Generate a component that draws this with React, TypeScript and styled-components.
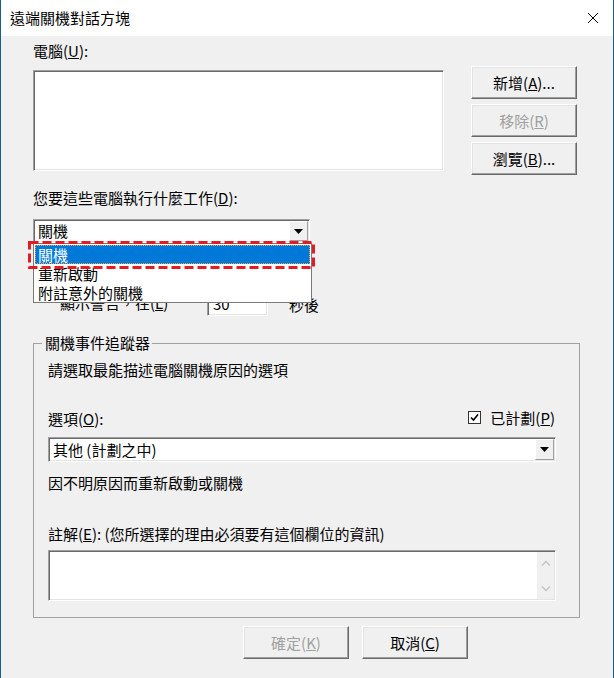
import React from "react";
import styled, { createGlobalStyle, css } from "styled-components";

const Global = createGlobalStyle`
  html, body { margin: 0; padding: 0; background: #ffffff; }
  body {
    font-family: "Noto Sans CJK TC", "Noto Sans", sans-serif;
    font-size: 15px;
    color: #000;
  }
  * { box-sizing: border-box; }
`;

const sunken = css`
  background: #ffffff;
  border: 1px solid;
  border-color: #a0a0a0 #ffffff #ffffff #a0a0a0;
  box-shadow: inset 1px 1px 0 #696969, inset -1px -1px 0 #e3e3e3;
`;

const Window = styled.div`
  width: 614px;
  height: 678px;
  border-left: 1px solid #1b5c8b;
  border-right: 1px solid #1b5c8b;
  background: #f0f0f0;
  display: flex;
  flex-direction: column;
  overflow: hidden;
`;

const TitleBar = styled.div`
  height: 36px;
  flex-shrink: 0;
  background: #ffffff;
  display: flex;
  align-items: center;
  justify-content: space-between;
  padding: 0 14px 0 9px;
`;

const Title = styled.span`
  line-height: 20px;
  white-space: nowrap;
`;

const CloseBtn = styled.div`
  width: 12px;
  height: 12px;
  display: flex;
`;

const Body = styled.div`
  padding-left: 32px;
  display: flex;
  flex-direction: column;
  align-items: flex-start;
`;

const Label = styled.div<{ $mt: number }>`
  margin-top: ${(p) => p.$mt}px;
  height: 20px;
  line-height: 20px;
  white-space: nowrap;
`;

const TopRow = styled.div`
  margin-top: 5px;
  display: flex;
  align-items: flex-start;
`;

const ListBox = styled.div`
  ${sunken};
  margin-top: 4px;
  width: 411px;
  height: 101px;
`;

const ButtonColumn = styled.div`
  margin-left: 27px;
  display: flex;
  flex-direction: column;
  gap: 5px;
`;

const PushButton = styled.div<{ $disabled?: boolean }>`
  width: 106px;
  height: 33px;
  display: flex;
  align-items: center;
  justify-content: center;
  line-height: 20px;
  white-space: nowrap;
  background: #f0f0f0;
  color: ${(p) => (p.$disabled ? "#a0a0a0" : "#000")};
  border: 1px solid;
  border-color: #ffffff #696969 #696969 #ffffff;
  box-shadow: inset -1px -1px 0 #a0a0a0, inset 1px 1px 0 #e3e3e3;
`;

const ComboWrap = styled.div`
  position: relative;
  margin-top: 11px;
`;

const Combo = styled.div<{ $w: number; $h: number }>`
  ${sunken};
  width: ${(p) => p.$w}px;
  height: ${(p) => p.$h}px;
  padding: 1px;
  display: flex;
  align-items: stretch;
`;

const ComboText = styled.span`
  flex: 1;
  padding-left: 3px;
  display: flex;
  align-items: center;
  line-height: 20px;
  white-space: nowrap;
`;

const ArrowBtn = styled.div`
  width: 19px;
  background: #f0f0f0;
  border: 1px solid;
  border-color: #ffffff #a0a0a0 #a0a0a0 #ffffff;
  display: flex;
  align-items: center;
  justify-content: center;
`;

const DropList = styled.div`
  position: absolute;
  left: 0;
  top: 100%;
  width: 279px;
  background: #ffffff;
  border: 1px solid #7a7a7a;
  padding: 1px 1px 0 1px;
  z-index: 2;
`;

const DropItem = styled.div<{ $sel?: boolean }>`
  height: 19px;
  line-height: 19px;
  padding-left: 3px;
  white-space: nowrap;
  background: ${(p) => (p.$sel ? "#0078d7" : "transparent")};
  color: ${(p) => (p.$sel ? "#ffffff" : "#000")};
  outline: ${(p) => (p.$sel ? "1px dotted #f3a43b" : "none")};
  outline-offset: -1px;
`;

const Annotation = styled.svg`
  position: absolute;
  left: -5px;
  top: 22px;
  z-index: 3;
  overflow: visible;
`;

const WarnRow = styled.div`
  margin-top: 47px;
  height: 26px;
  display: flex;
  align-items: center;
`;

const WarnLabel = styled.span`
  margin-left: 27px;
  width: 147px;
  line-height: 20px;
  white-space: nowrap;
`;

const NumBox = styled.div`
  ${sunken};
  width: 61px;
  height: 26px;
  padding-left: 5px;
  display: flex;
  align-items: center;
`;

const Unit = styled.span`
  margin-left: 21px;
  margin-top: 3px;
  line-height: 20px;
`;

const Group = styled.fieldset`
  margin: 17px 0 0 0;
  width: 547px;
  min-inline-size: 0;
  border: 1px solid #a0a0a0;
  padding: 0 23px 16px 14px;
`;

const Legend = styled.legend`
  margin-left: -6px;
  padding: 0 2px 0 3px;
  line-height: 20px;
  white-space: nowrap;
`;

const GroupInner = styled.div`
  display: flex;
  flex-direction: column;
`;

const OptionRow = styled.div`
  margin-top: 28px;
  height: 20px;
  display: flex;
  align-items: center;
  justify-content: space-between;
  padding-right: 1px;
`;

const CheckWrap = styled.div`
  display: flex;
  align-items: center;
  gap: 9px;
  line-height: 20px;
  white-space: nowrap;
`;

const CheckBox = styled.div`
  width: 13px;
  height: 13px;
  border: 1px solid #333333;
  background: #ffffff;
  display: flex;
  align-items: center;
  justify-content: center;
  margin-top: -1px;
`;

const ComboWrap2 = styled.div`
  margin-top: 9px;
`;

const TextArea = styled.div`
  ${sunken};
  margin-top: 6px;
  width: 508px;
  height: 51px;
  padding: 1px;
  display: flex;
  justify-content: flex-end;
`;

const ScrollCol = styled.div`
  width: 17px;
  background: #f0f0f0;
  display: flex;
  flex-direction: column;
  align-items: center;
  justify-content: space-between;
  padding: 8px 0 7px;
`;

const BottomRow = styled.div`
  margin-top: 8px;
  width: 547px;
  display: flex;
  justify-content: flex-end;
  gap: 13px;
  padding-right: 112px;
`;

const Arrow = () => (
  <svg width="9" height="5" viewBox="0 0 9 5">
    <polygon points="0,0 9,0 4.5,5" fill="#000" />
  </svg>
);

const Chevron = ({ up }: { up?: boolean }) => (
  <svg width="10" height="6" viewBox="0 0 10 6">
    <polyline
      points={up ? "1,5.5 5,1.5 9,5.5" : "1,0.5 5,4.5 9,0.5"}
      fill="none"
      stroke="#c4c4c4"
      strokeWidth="1.4"
    />
  </svg>
);

export default function App() {
  return (
    <>
      <Global />
      <Window>
        <TitleBar>
          <Title>遠端關機對話方塊</Title>
          <CloseBtn>
            <svg width="12" height="12" viewBox="0 0 12 12">
              <path d="M1 1 L11 11 M11 1 L1 11" stroke="#000" strokeWidth="1" />
            </svg>
          </CloseBtn>
        </TitleBar>
        <Body>
          <Label $mt={5}>
            電腦(<u>U</u>):
          </Label>
          <TopRow>
            <ListBox />
            <ButtonColumn>
              <PushButton>
                新增(<u>A</u>)...
              </PushButton>
              <PushButton $disabled>
                移除(<u>R</u>)
              </PushButton>
              <PushButton>
                瀏覽(<u>B</u>)...
              </PushButton>
            </ButtonColumn>
          </TopRow>
          <Label $mt={13}>
            您要這些電腦執行什麼工作(<u>D</u>):
          </Label>
          <ComboWrap>
            <Combo $w={277} $h={24}>
              <ComboText>關機</ComboText>
              <ArrowBtn>
                <Arrow />
              </ArrowBtn>
            </Combo>
            <DropList>
              <DropItem $sel>關機</DropItem>
              <DropItem>重新啟動</DropItem>
              <DropItem>附註意外的關機</DropItem>
            </DropList>
            <Annotation width="287" height="28" viewBox="0 0 287 28">
              <rect
                x="1.5"
                y="1.5"
                width="284"
                height="25"
                fill="none"
                stroke="#e31b23"
                strokeWidth="3"
                strokeDasharray="9 4"
              />
            </Annotation>
          </ComboWrap>
          <WarnRow>
            <WarnLabel>
              顯示警告，在(<u>L</u>)
            </WarnLabel>
            <NumBox>30</NumBox>
            <Unit>秒後</Unit>
          </WarnRow>
          <Group>
            <Legend>關機事件追蹤器</Legend>
            <GroupInner>
              <Label $mt={7}>請選取最能描述電腦關機原因的選項</Label>
              <OptionRow>
                <span>
                  選項(<u>O</u>):
                </span>
                <CheckWrap>
                  <CheckBox>
                    <svg width="9" height="9" viewBox="0 0 9 9">
                      <polyline points="1,4.5 3.5,7 8,1.5" fill="none" stroke="#000" strokeWidth="1.6" />
                    </svg>
                  </CheckBox>
                  <span>
                    已計劃(<u>P</u>)
                  </span>
                </CheckWrap>
              </OptionRow>
              <ComboWrap2>
                <Combo $w={508} $h={25}>
                  <ComboText>其他 (計劃之中)</ComboText>
                  <ArrowBtn>
                    <Arrow />
                  </ArrowBtn>
                </Combo>
              </ComboWrap2>
              <Label $mt={11}>因不明原因而重新啟動或關機</Label>
              <Label $mt={31}>
                註解(<u>E</u>): (您所選擇的理由必須要有這個欄位的資訊)
              </Label>
              <TextArea>
                <ScrollCol>
                  <Chevron up />
                  <Chevron />
                </ScrollCol>
              </TextArea>
            </GroupInner>
          </Group>
          <BottomRow>
            <PushButton $disabled>
              確定(<u>K</u>)
            </PushButton>
            <PushButton>
              取消(<u>C</u>)
            </PushButton>
          </BottomRow>
        </Body>
      </Window>
    </>
  );
}
